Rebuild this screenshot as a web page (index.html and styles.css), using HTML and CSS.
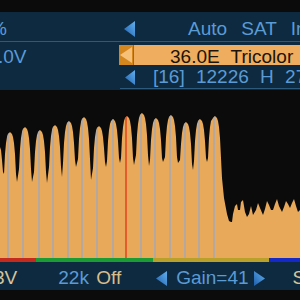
FILE: index.html
```html
<!DOCTYPE html>
<html lang="en">
<head>
  <meta charset="UTF-8">
  <meta name="viewport" content="width=device-width, initial-scale=1.0">
  <title>Satellite Finder</title>
  <link rel="stylesheet" href="styles.css">
</head>
<body>

<!-- shared gradients for the arrow buttons -->
<svg class="defs" width="0" height="0">
  <defs>
    <linearGradient id="blueArrow" x1="1" y1="0" x2="0" y2="1">
      <stop offset="0" stop-color="#62b0ee"/>
      <stop offset="1" stop-color="#1d5fae"/>
    </linearGradient>
  </defs>
</svg>

<div class="screen">
  <div class="topbar"></div>

  <!-- Menu rows -->
  <div class="menu">
    <div class="row row-head">
      <div class="label"><span class="cut cut-pct">%</span></div>
      <div class="field">
        <svg class="arrow" width="11" height="16" viewBox="0 0 11 16"><path d="M0 8 L11 0 L11 16 Z" fill="url(#blueArrow)"/></svg>
        <span class="value value-mode">Auto SAT Installation</span>
      </div>
    </div>

    <div class="row row-sat">
      <div class="label"><span class="cut cut-volt">.0V</span></div>
      <div class="field field-active">
        <div class="knob">
          <svg width="12" height="16" viewBox="0 0 12 16"><path d="M0 8 L12 0 L12 16 Z" fill="#f6c078"/></svg>
        </div>
        <span class="value value-sat">36.0E Tricolor</span>
      </div>
    </div>

    <div class="row row-tp">
      <div class="label"></div>
      <div class="field field-tp">
        <svg class="arrow" width="10" height="15" viewBox="0 0 10 15"><path d="M0 7.5 L10 0 L10 15 Z" fill="url(#blueArrow)"/></svg>
        <span class="value value-tp">[16] 12226 H 27500</span>
      </div>
    </div>
  </div>

  <!-- Spectrum -->
  <div class="chart">
    <svg width="300" height="168" viewBox="0 90 300 168">
      <defs>
        <clipPath id="specClip">
          <path d="M0 258 L0 147 L1 150 L2 160 L3 172
            L4 174 L5 154 L6 143 L7 137 L8 134 L10 132 L12 134 L13 137 L14 143 L15 154 L16 174 L17 182
            L19 169 L20 149 L21 138 L22 132 L23 129 L25 127 L27 129 L28 132 L29 138 L30 149 L31 169 L32 182
            L34 172 L35 152 L36 141 L37 135 L38 132 L40 130 L42 132 L43 135 L44 141 L45 152 L46 172 L47 183
            L49 167 L50 147 L51 136 L52 130 L53 127 L55 125 L57 127 L58 130 L59 136 L60 147 L61 167 L62 177
            L63 163 L64 143 L65 132 L66 126 L67 123 L69 121 L71 123 L72 126 L73 132 L74 143 L75 160 L76 167
            L78 159 L79 139 L80 128 L81 122 L82 119 L84 117 L86 119 L87 122 L88 128 L89 139 L90 159 L91 180
            L93 168 L94 148 L95 137 L96 131 L97 128 L99 126 L101 128 L102 131 L103 137 L104 148 L105 162 L106 167
            L107 161 L108 141 L109 130 L110 124 L111 121 L113 119 L115 121 L116 124 L117 130 L118 141 L119 158 L120 163
            L121 158 L122 138 L123 127 L124 121 L125 118 L127 116 L129 118 L130 121 L131 127 L132 138 L133 158 L134 165
            L136 155 L137 135 L138 124 L139 118 L140 115 L142 113 L144 115 L145 118 L146 124 L147 135 L148 155 L149 166
            L150 160 L151 140 L152 129 L153 123 L154 120 L156 118 L158 120 L159 123 L160 129 L161 140 L162 158 L163 162
            L165 157 L166 137 L167 126 L168 120 L169 117 L171 115 L173 117 L174 120 L175 126 L176 137 L177 157 L178 163
            L180 160 L181 144 L182 133 L183 127 L184 124 L186 122 L188 124 L189 127 L190 133 L191 144 L192 164 L193 170
            L194 161 L195 141 L196 130 L197 124 L198 121 L200 119 L202 121 L203 124 L204 130 L205 141 L206 158 L207 162
            L208 158 L209 138 L210 127 L211 121 L213 118 L215 116 L217 118 L218 121 L219 127 L220 138 L221 158
            L222 178 L224 198 L227 214 L229 221 L231 222 L232 222 L233 214 L235 206 L237 204 L238 210
            L240 210 L241 202 L243 200 L245 212 L247 217 L249 214 L251 206 L253 215 L256 210 L258 203
            L260 208 L263 215 L265 209 L267 201 L269 205 L271 210 L273 210 L275 204 L277 199 L279 206
            L282 212 L284 207 L286 201 L288 204 L290 208 L292 203 L294 199 L296 206 L298 212 L300 210
            L300 258 Z"/>
        </clipPath>
      </defs>
      <rect x="0" y="90" width="300" height="168" fill="#0b0b0b"/>
      <g clip-path="url(#specClip)">
        <rect x="0" y="90" width="300" height="168" fill="#e9a95b"/>
        <g class="markers">
          <line x1="8" y1="90" x2="8" y2="258"/>
          <line x1="23" y1="90" x2="23" y2="258"/>
          <line x1="39" y1="90" x2="39" y2="258"/>
          <line x1="53" y1="90" x2="53" y2="258"/>
          <line x1="68" y1="90" x2="68" y2="258"/>
          <line x1="82" y1="90" x2="82" y2="258"/>
          <line x1="97" y1="90" x2="97" y2="258"/>
          <line x1="113" y1="90" x2="113" y2="258"/>
          <line x1="141" y1="90" x2="141" y2="258"/>
          <line x1="155" y1="90" x2="155" y2="258"/>
          <line x1="170" y1="90" x2="170" y2="258"/>
          <line x1="185" y1="90" x2="185" y2="258"/>
          <line x1="199" y1="90" x2="199" y2="258"/>
          <line x1="214" y1="90" x2="214" y2="258"/>
        </g>
        <line class="cursor" x1="126" y1="90" x2="126" y2="258"/>
      </g>
    </svg>
  </div>

  <!-- Colour key strip -->
  <div class="strip">
    <span class="key key-red"></span>
    <span class="key key-green"></span>
    <span class="key key-yellow"></span>
    <span class="key key-blue"></span>
  </div>

  <!-- Status bar -->
  <div class="status">
    <span class="cut cut-lnb">3V</span>
    <span class="tone"><span class="tone-name">22k</span> <span class="tone-state">Off</span></span>
    <svg class="step step-left" width="11" height="15" viewBox="0 0 11 15"><path d="M0 7.5 L11 0 L11 15 Z" fill="url(#blueArrow)"/></svg>
    <span class="gain">Gain=41</span>
    <svg class="step step-right" width="11" height="15" viewBox="0 0 11 15"><path d="M11 7.5 L0 0 L0 15 Z" fill="url(#blueArrow)"/></svg>
    <span class="next-item">S</span>
  </div>

  <div class="bottom"></div>
</div>

</body>
</html>
```

FILE: styles.css
```css
body {
  margin: 0;
  padding: 0;
  width: 300px;
  height: 300px;
  overflow: hidden;
  background: #0b0b0b;
  font-family: "Liberation Sans", Arial, sans-serif;
  font-size: 19px;
  color: #5b9bd5;
}

.defs {
  display: block;
  width: 0;
  height: 0;
}

.screen {
  display: flex;
  flex-direction: column;
  width: 300px;
}

.topbar {
  height: 12px;
}

/* Menu */
.menu {
  background: #0e2a40;
  height: 78px;
  display: flex;
  flex-direction: column;
}

.row {
  display: grid;
  grid-template-columns: 119px 181px;
  white-space: nowrap;
  box-sizing: border-box;
}

.label {
  overflow: hidden;
}

.field {
  display: flex;
  align-items: center;
  overflow: hidden;
}

.arrow {
  flex: none;
}

.row-head {
  height: 30px;
  padding-top: 4px;
  line-height: 25px;
  border-bottom: 1px solid #2c5a7c;
}

.row-head .arrow {
  margin-left: 5px;
}

.value-mode {
  margin-left: 53px;
  word-spacing: 9px;
}

.row-sat {
  height: 24px;
  padding-top: 3px;
}

.row-sat .label {
  height: 20px;
  line-height: 20px;
  padding-top: 2px;
  box-sizing: border-box;
}

.field-active {
  height: 20px;
  background: #efad5f;
  color: #1c1309;
  align-items: stretch;
}

.knob {
  flex: none;
  width: 15px;
  background: #d4861f;
  border-right: 1px solid #a9660f;
  display: flex;
  align-items: center;
  justify-content: flex-end;
  padding-right: 1px;
  box-sizing: border-box;
}

.value-sat {
  margin-left: 36px;
  line-height: 20px;
  padding-top: 2px;
  word-spacing: 6px;
}

.row-tp {
  height: 24px;
  line-height: 22px;
}

.field-tp {
  height: 23px;
  box-sizing: border-box;
  border-bottom: 1px solid #2c5a7c;
  margin-left: 1px;
}

.field-tp .arrow {
  margin-left: 5px;
}

.value-tp {
  margin-left: 18px;
  word-spacing: 6px;
}

.cut-pct {
  display: inline-block;
  margin-left: -10px;
}

.cut-volt {
  display: inline-block;
  margin-left: -2px;
}

/* Spectrum */
.chart {
  height: 168px;
}

.chart svg {
  display: block;
}

.markers line {
  stroke: #a2a9b6;
  stroke-width: 1.5;
}

.cursor {
  stroke: #e2431a;
  stroke-width: 1.5;
}

/* Colour key */
.strip {
  display: flex;
  height: 4px;
}

.key { display: block; height: 100%; }
.key-red { width: 36px; background: #c42a1e; }
.key-green { width: 117px; background: #1c9a34; }
.key-yellow { width: 116px; background: #b9a02a; }
.key-blue { flex: 1; background: #1429c6; }

/* Status bar */
.status {
  height: 28px;
  padding-top: 4px;
  box-sizing: border-box;
  line-height: 24px;
  background: #0e2a40;
  display: flex;
  align-items: center;
  white-space: nowrap;
}

.cut-lnb {
  margin-left: -6px;
  color: #d6c39a;
}

.tone {
  margin-left: 41px;
  word-spacing: 2px;
}

.tone-state {
  color: #d9be8a;
}

.step {
  flex: none;
}

.step-left {
  margin-left: 35px;
}

.gain {
  margin-left: 9px;
}

.step-right {
  margin-left: 5px;
}

.next-item {
  flex: none;
  margin-left: 28px;
  color: #d6c39a;
}

.bottom {
  height: 10px;
}
```
